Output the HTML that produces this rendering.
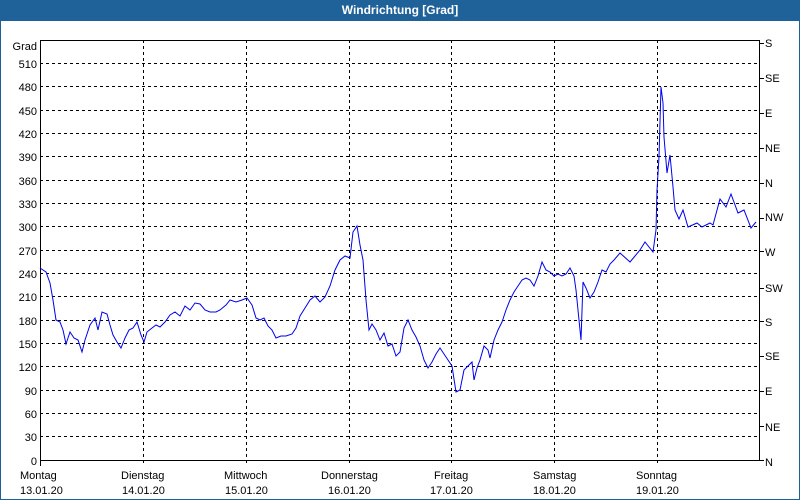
<!DOCTYPE html>
<html><head><meta charset="utf-8"><style>
body{margin:0;width:800px;height:500px;overflow:hidden;background:#fff;font-family:"Liberation Sans",sans-serif}
.win{position:absolute;left:0;top:0;width:798px;height:498px;border:1px solid #1f6199;}
.title{position:absolute;left:0;top:0;width:800px;height:21px;background:#1f6199;color:#fff;font-weight:bold;font-size:12px;text-align:center;line-height:21px}
svg{position:absolute;left:0;top:0}
text{font-family:"Liberation Sans",sans-serif;font-size:11px;fill:#000}
</style></head><body>
<div class="win"></div>
<div class="title">Windrichtung [Grad]</div>
<svg width="800" height="500">
<g stroke="#000" stroke-dasharray="3,3" stroke-width="1">
<line x1="40" x2="759" y1="63.5" y2="63.5"/><line x1="40" x2="759" y1="86.5" y2="86.5"/><line x1="40" x2="759" y1="110.5" y2="110.5"/><line x1="40" x2="759" y1="133.5" y2="133.5"/><line x1="40" x2="759" y1="156.5" y2="156.5"/><line x1="40" x2="759" y1="180.5" y2="180.5"/><line x1="40" x2="759" y1="203.5" y2="203.5"/><line x1="40" x2="759" y1="226.5" y2="226.5"/><line x1="40" x2="759" y1="250.5" y2="250.5"/><line x1="40" x2="759" y1="273.5" y2="273.5"/><line x1="40" x2="759" y1="296.5" y2="296.5"/><line x1="40" x2="759" y1="320.5" y2="320.5"/><line x1="40" x2="759" y1="343.5" y2="343.5"/><line x1="40" x2="759" y1="366.5" y2="366.5"/><line x1="40" x2="759" y1="390.5" y2="390.5"/><line x1="40" x2="759" y1="413.5" y2="413.5"/><line x1="40" x2="759" y1="436.5" y2="436.5"/>
<line x1="143.5" x2="143.5" y1="40" y2="466"/><line x1="246.5" x2="246.5" y1="40" y2="466"/><line x1="349.5" x2="349.5" y1="40" y2="466"/><line x1="451.5" x2="451.5" y1="40" y2="466"/><line x1="554.5" x2="554.5" y1="40" y2="466"/><line x1="657.5" x2="657.5" y1="40" y2="466"/>
</g>
<rect x="40.5" y="40.5" width="719" height="420" fill="none" stroke="#000"/>
<line x1="40.5" x2="40.5" y1="460" y2="466" stroke="#000"/>
<g stroke="#000"><line x1="759" x2="764" y1="43.5" y2="43.5"/><line x1="759" x2="764" y1="78.5" y2="78.5"/><line x1="759" x2="764" y1="113.5" y2="113.5"/><line x1="759" x2="764" y1="148.5" y2="148.5"/><line x1="759" x2="764" y1="183.5" y2="183.5"/><line x1="759" x2="764" y1="218.5" y2="218.5"/><line x1="759" x2="764" y1="251.5" y2="251.5"/><line x1="759" x2="764" y1="288.5" y2="288.5"/><line x1="759" x2="764" y1="321.5" y2="321.5"/><line x1="759" x2="764" y1="356.5" y2="356.5"/><line x1="759" x2="764" y1="391.5" y2="391.5"/><line x1="759" x2="764" y1="426.5" y2="426.5"/><line x1="759" x2="764" y1="460.5" y2="460.5"/></g>
<g text-anchor="end">
<text x="37" y="50">Grad</text><text x="37" y="68">510</text><text x="37" y="91">480</text><text x="37" y="115">450</text><text x="37" y="138">420</text><text x="37" y="161">390</text><text x="37" y="185">360</text><text x="37" y="208">330</text><text x="37" y="231">300</text><text x="37" y="255">270</text><text x="37" y="278">240</text><text x="37" y="301">210</text><text x="37" y="325">180</text><text x="37" y="348">150</text><text x="37" y="371">120</text><text x="37" y="395">90</text><text x="37" y="418">60</text><text x="37" y="441">30</text><text x="37" y="465">0</text>
</g>
<g>
<text x="765" y="47">S</text><text x="765" y="82">SE</text><text x="765" y="117">E</text><text x="765" y="152">NE</text><text x="765" y="187">N</text><text x="765" y="221">NW</text><text x="765" y="256">W</text><text x="765" y="292">SW</text><text x="765" y="326">S</text><text x="765" y="360">SE</text><text x="765" y="395">E</text><text x="765" y="431">NE</text><text x="765" y="466">N</text>
</g>
<g>
<text x="20" y="479">Montag</text><text x="20" y="494">13.01.20</text>
<text x="121" y="479">Dienstag</text><text x="122" y="494">14.01.20</text>
<text x="224" y="479">Mittwoch</text><text x="225" y="494">15.01.20</text>
<text x="321" y="479">Donnerstag</text><text x="328" y="494">16.01.20</text>
<text x="434" y="479">Freitag</text><text x="430" y="494">17.01.20</text>
<text x="533" y="479">Samstag</text><text x="533" y="494">18.01.20</text>
<text x="636" y="479">Sonntag</text><text x="636" y="494">19.01.20</text>
</g>
<polyline fill="none" stroke="#0000ee" stroke-width="1" points="40,268 46,272 50,283 53,300 56,320 60,322 63,330 66,344 70,332 74,338 78,340 82,352 85,340 90,325 95,318 98,330 102,312 107,314 110,325 113,335 117,342 121,348 125,338 129,330 133,328 137,322 141,335 144,342 147,332 152,328 156,325 160,327 165,322 170,315 175,312 180,316 185,306 190,310 195,303 200,304 205,310 210,312 216,312 220,310 226,305 230,300 236,302 242,300 247,298 252,305 256,318 260,320 264,318 268,326 272,330 276,338 281,336 286,336 292,334 296,328 300,316 305,308 310,300 315,296 320,302 325,297 330,286 335,270 340,260 345,256 350,258 353,232 357,226 360,245 363,260 366,300 369,330 372,324 376,330 380,340 384,333 388,346 392,344 396,356 400,352 404,328 408,320 412,330 416,337 420,346 424,360 428,368 432,362 436,354 440,348 444,354 448,360 452,366 456,392 460,390 464,370 468,366 472,362 474,380 477,368 480,360 484,346 488,350 490,358 494,340 498,330 502,322 506,310 510,300 514,292 518,286 522,280 526,278 530,280 534,286 538,276 542,262 546,270 550,272 554,276 558,274 562,276 566,274 570,268 574,276 576,290 579,320 581,340 583,282 586,288 590,298 594,292 598,282 602,270 606,272 610,264 614,260 620,253 630,262 640,250 645,242 653,252 656,230 657,190 659,157 661,87 663,103 664,137 667,173 670,155 673,187 675,210 679,219 683,210 688,227 697,223 702,227 710,223 713,225 720,199 726,207 731,194 738,213 744,210 751,228 756,222"/>
</svg>
</body></html>
